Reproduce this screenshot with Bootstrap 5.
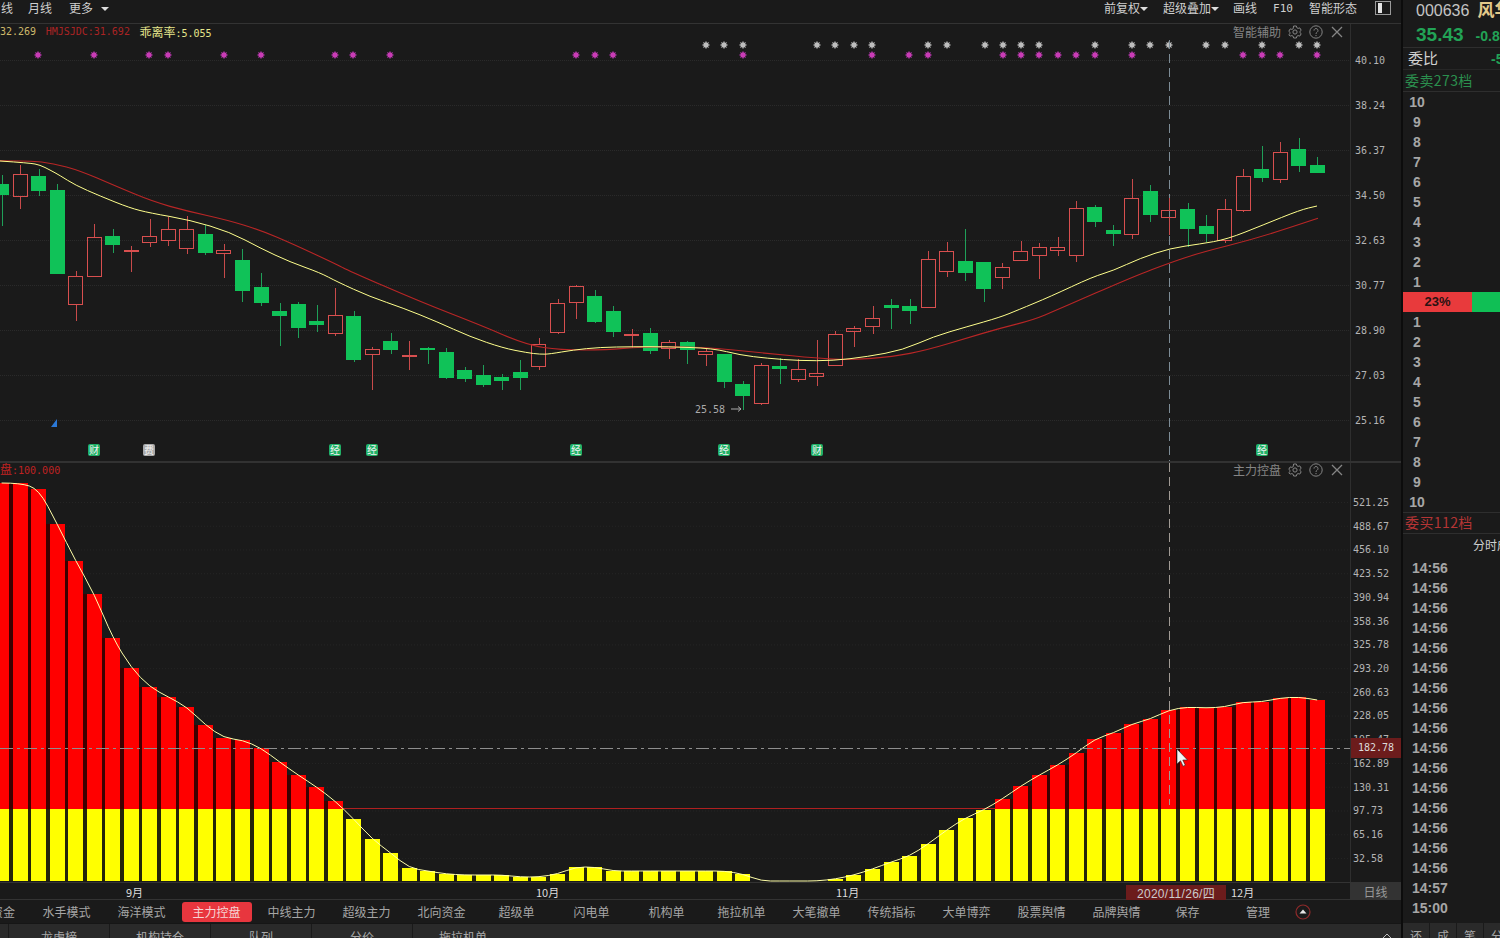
<!DOCTYPE html>
<html lang="zh-CN">
<head>
  <meta charset="UTF-8" />
  <meta name="viewport" content="width=device-width, initial-scale=1" />
  <title>000636 K线</title>
  <link href="https://cdn.jsdelivr.net/npm/bootstrap@5.3.0/dist/css/bootstrap.min.css" rel="stylesheet" />
  <style>
    html, body { height: 100%; overflow: hidden; }
    body { background: #1a1a1a; color: #bbb; font: 12px/1.2 "Liberation Sans", "Noto Sans CJK SC", sans-serif; }
    .cjk { font-family: "Noto Sans CJK SC", sans-serif; }
    .mono { font-family: "DejaVu Sans Mono", "Noto Sans CJK SC", monospace; font-size: 10px; }
    .mono .cjk { font-size: 12px; }
    .app { width: 1500px; height: 938px; overflow: hidden; }
    .main-col { width: 1401px; flex: none; }
    .side-col { width: 99px; flex: none; border-left: 2px solid #0c0c0c; white-space: nowrap; overflow: hidden; }

    .toolbar { height: 24px; flex: none; padding-bottom: 6px; border-bottom: 1px solid #333; color: #cfcfcf; font-family: "Noto Sans CJK SC", sans-serif; white-space: nowrap; }
    .toolbar .dropdown-toggle::after { margin-left: 0; vertical-align: 2px; border-top-width: 4px; border-left-width: 4px; border-right-width: 4px; color: #ddd; }
    .tool-left { margin-left: -11px; gap: 15px; }
    .tool-left .more-btn { margin-left: 2px; }
    .tool-left .more-btn::after { margin-left: 8px; }
    .tool-right { gap: 15px; padding-right: 10px; }
    .tool-right .f10-btn { font-size: 11px; margin-right: 1px; }
    .tool-right .super-btn { margin-right: -1px; }
    .tool-right .draw-btn { margin-right: 1px; }
    .layout-ico { width: 16px; height: 14px; margin-left: 3px; }

    .upper-panel { height: 439px; flex: none; border-bottom: 2px solid #323232; }
    .lower-panel { height: 419px; flex: none; }
    .chart-box { width: 1350px; flex: none; }
    .chart-box svg { display: block; width: 1350px; height: 100%; }
    .upper-panel .chart-box { height: 437px; }
    .axis-col { width: 51px; flex: none; border-left: 1px solid #2e2e2e; color: #b4b4b4; white-space: nowrap; overflow: hidden; }
    .upper-axis { padding-top: 14px; }
    .upper-axis div { height: 45px; line-height: 45px; padding-left: 4px; }
    .lower-axis { padding-top: 28px; }
    .lower-axis div { height: 23.73px; line-height: 23.73px; padding-left: 2px; }

    .info-line { left: 0; top: 1px; gap: 9.5px; line-height: 14px; white-space: nowrap; }
    .info-gold { color: #cdb96a; }
    .info-red { color: #aa2424; }
    .info-pale { color: #e6e68c; }
    .panel-tools { right: 6px; top: 0; width: 111px; height: 16px; color: #858585; }
    .lower-panel .panel-tools { top: -1px; }
    .panel-tools svg { width: 14px; height: 14px; flex: none; margin-left: 7px; }
    .lower-title { left: 0; top: -2px; color: #c02222; line-height: 14px; margin-top: 1px; white-space: nowrap; }
    .price-tag { left: 1351px; top: 275px; width: 50px; height: 20px; line-height: 20px; background: #6c1c1c; color: #ddd; text-align: center; }

    .date-row { height: 17px; flex: none; border-top: 1px solid #333; color: #ddd; }
    .month-label { top: 2px; line-height: 14px; font-size: 11px; }
    .date-tag { left: 1126px; top: 2px; width: 100px; height: 15px; line-height: 15px; background: #6c1c1c; color: #ccc; text-align: center; letter-spacing: .3px; }
    .period-box { left: 1350px; top: 0; width: 51px; height: 17px; line-height: 17px; background: #333; color: #999; text-align: center; }

    .tab-bar { height: 24px; flex: none; border-top: 1px solid #333; color: #a6a6a6; font-family: "Noto Sans CJK SC", sans-serif; white-space: nowrap; }
    .tab-item { width: 75px; flex: none; text-align: center; line-height: 20px; }
    .tab-cut { width: 38px; margin-left: -9px; text-align: left; }
    .tab-on { background: #e8363e; color: #f6d5d5; border-radius: 3px; margin: 0 2.5px; width: 70px; }
    .tab-save { width: 67px; }
    .tab-manage { width: 74px; }
    .up-ico { width: 16px; height: 16px; flex: none; }

    .foot-bar { height: 15px; flex: none; background: #2a2a2a; border-top: 1px solid #161616; color: #a8a8a8; font-family: "Noto Sans CJK SC", sans-serif; overflow: hidden; }
    .foot-cell { width: 101px; flex: none; text-align: center; border-left: 1px solid #1a1a1a; line-height: 14px; padding-top: 6px; height: 20px; }
    .foot-gap { width: 8px; flex: none; }
    .foot-chev { margin-left: auto; margin-right: 8px; width: 12px; height: 8px; margin-top: 8px; }

    .code-row { height: 19px; line-height: 19px; padding-left: 13px; color: #c4c4c4; font-size: 16px; overflow: hidden; }
    .stock-name { color: #e3c98a; font: bold 17px/1 "Noto Sans CJK SC", sans-serif; margin-left: 8px; }
    .price-row { height: 29px; line-height: 31px; padding-left: 13px; color: #22a356; font-weight: 700; border-bottom: 1px solid #2e2e2e; }
    .price-now { font-size: 19px; }
    .price-chg { font-size: 14px; margin-left: 12px; }
    .ratio-row { height: 21px; padding-left: 5px; font: 15px/20px "Noto Sans CJK SC", sans-serif; color: #d0d0d0; }
    .ratio-val { margin-left: 53px; color: #22a356; font-family: "Liberation Sans", sans-serif; font-weight: 700; font-size: 14px; }
    .book-head { height: 23px; line-height: 20px; font-size: 14px; font-family: "Noto Sans CJK SC", sans-serif; padding-left: 2px; letter-spacing: .4px; border-bottom: 1px solid #2e2e2e; }
    .book-sell { color: #2b8f4e; border-top: 1px solid #262626; }
    .book-buy { color: #b53535; border-top: 1px solid #2e2e2e; height: 22px; line-height: 19px; }
    .book-num { height: 20px; line-height: 20px; width: 28px; text-align: center; color: #a6a6a6; font-size: 14px; font-weight: 700; }
    .ratio-bar { height: 20px; }
    .ratio-red { width: 69px; background: #e83a3c; color: #2a1212; text-align: center; line-height: 20px; font-size: 13px; font-weight: 700; }
    .ratio-green { flex: 1; background: #10bf55; }
    .deal-head { height: 24px; line-height: 22px; padding-left: 70px; color: #cfcfcf; font-family: "Noto Sans CJK SC", sans-serif; }
    .deal-time { height: 20px; line-height: 20px; padding-left: 9px; color: #a6a6a6; font-size: 14px; font-weight: 700; }
    .side-foot { height: 15px; margin-top: 5px; background: #2a2a2a; color: #a8a8a8; font-family: "Noto Sans CJK SC", sans-serif; overflow: hidden; }
    .side-foot span { width: 27px; flex: none; text-align: center; padding-top: 6px; line-height: 14px; height: 20px; border-right: 1px solid #1a1a1a; }
  </style>
</head>
<body>

<svg width="0" height="0" class="position-absolute">
  <symbol id="gear" viewBox="0 0 14 14">
    <path d="M5.6 1h2.8l.4 1.7 1.3.7 1.7-.5 1.4 2.4-1.3 1.2v1l1.3 1.2-1.4 2.4-1.7-.5-1.3.7-.4 1.7H5.6l-.4-1.7-1.3-.7-1.7.5L.8 9.7 2.1 8.5v-1L.8 6.3l1.4-2.4 1.7.5 1.3-.7z" fill="none" stroke="currentColor" stroke-width="1"/>
    <circle cx="7" cy="7" r="2.1" fill="none" stroke="currentColor" stroke-width="1"/>
  </symbol>
  <symbol id="help" viewBox="0 0 14 14">
    <circle cx="7" cy="7" r="6.2" fill="none" stroke="currentColor" stroke-width="1"/>
    <path d="M5 5.6a2 2 0 1 1 3.1 1.6c-.7.5-1.1.9-1.1 1.7" fill="none" stroke="currentColor" stroke-width="1"/>
    <circle cx="7" cy="10.6" r=".7" fill="currentColor"/>
  </symbol>
  <symbol id="close" viewBox="0 0 14 14">
    <path d="M2 2l10 10M12 2L2 12" fill="none" stroke="currentColor" stroke-width="1.3"/>
  </symbol>
</svg>

<div class="app d-flex">
  <div class="main-col d-flex flex-column">

    <div class="toolbar d-flex align-items-center">
      <div class="tool-left d-flex">
        <span>周线</span><span>月线</span><span class="more-btn dropdown-toggle">更多</span>
      </div>
      <div class="tool-right d-flex align-items-center ms-auto">
        <span class="dropdown-toggle">前复权</span>
        <span class="dropdown-toggle super-btn">超级叠加</span>
        <span class="draw-btn">画线</span>
        <span class="mono f10-btn">F10</span>
        <span>智能形态</span>
        <svg class="layout-ico" viewBox="0 0 16 14">
          <rect x=".5" y=".5" width="15" height="13" fill="none" stroke="#9a9a9a"/>
          <rect x="3" y="2" width="4" height="10" fill="#e4e4e4"/>
        </svg>
      </div>
    </div>

    <div class="upper-panel d-flex">
      <div class="chart-box position-relative">
        <svg id="upperChart" viewBox="0 24 1350 437"></svg>
        <div class="info-line position-absolute d-flex mono">
          <span class="info-gold">32.269</span>
          <span class="info-red">HMJSJDC:31.692</span>
          <span class="info-pale"><span class="cjk">乖离率</span>:5.055</span>
        </div>
        <div class="panel-tools position-absolute d-flex align-items-center cjk">
          <span class="me-auto">智能辅助</span>
          <svg><use href="#gear"/></svg>
          <svg><use href="#help"/></svg>
          <svg><use href="#close"/></svg>
        </div>
      </div>
      <div id="upperAxis" class="axis-col upper-axis mono"></div>
    </div>

    <div class="lower-panel d-flex position-relative">
      <div class="chart-box position-relative">
        <svg id="lowerChart" viewBox="0 463 1350 419"></svg>
        <div class="lower-title position-absolute mono"><span class="cjk">盘</span>:100.000</div>
        <div class="panel-tools position-absolute d-flex align-items-center cjk">
          <span class="me-auto">主力控盘</span>
          <svg><use href="#gear"/></svg>
          <svg><use href="#help"/></svg>
          <svg><use href="#close"/></svg>
        </div>
      </div>
      <div id="lowerAxis" class="axis-col lower-axis mono"></div>
      <div class="price-tag position-absolute mono">182.78</div>
    </div>

    <div id="dateRow" class="date-row position-relative">
      <div class="date-tag position-absolute">2020/11/26/<span class="cjk">四</span></div>
      <div class="period-box position-absolute cjk">日线</div>
    </div>

    <div class="tab-bar d-flex align-items-center">
      <span class="tab-item tab-cut">资金</span>
      <span class="tab-item">水手模式</span>
      <span class="tab-item">海洋模式</span>
      <span class="tab-item tab-on">主力控盘</span>
      <span class="tab-item">中线主力</span>
      <span class="tab-item">超级主力</span>
      <span class="tab-item">北向资金</span>
      <span class="tab-item">超级单</span>
      <span class="tab-item">闪电单</span>
      <span class="tab-item">机构单</span>
      <span class="tab-item">拖拉机单</span>
      <span class="tab-item">大笔撤单</span>
      <span class="tab-item">传统指标</span>
      <span class="tab-item">大单博弈</span>
      <span class="tab-item">股票舆情</span>
      <span class="tab-item">品牌舆情</span>
      <span class="tab-item tab-save">保存</span>
      <span class="tab-item tab-manage">管理</span>
      <svg class="up-ico" viewBox="0 0 16 16">
        <circle cx="8" cy="8" r="7" fill="none" stroke="#8e2a2a" stroke-width="1.2"/>
        <path d="M4.5 9.5L8 5.5l3.500 4z" fill="#e8e8e8"/>
      </svg>
    </div>

    <div class="foot-bar d-flex">
      <div class="foot-gap"></div>
      <div class="foot-cell">龙虎榜</div>
      <div class="foot-cell">机构持仓</div>
      <div class="foot-cell">队列</div>
      <div class="foot-cell">分价</div>
      <div class="foot-cell">拖拉机单</div>
      <svg class="foot-chev" viewBox="0 0 12 8"><path d="M1 7l5-5 5 5" fill="none" stroke="#bbb"/></svg>
    </div>
  </div>

  <div class="side-col">
    <div class="code-row">000636<span class="stock-name">风华</span></div>
    <div class="price-row"><span class="price-now">35.43</span><span class="price-chg">-0.86</span></div>
    <div class="ratio-row">委比<span class="ratio-val">-5</span></div>
    <div class="book-head book-sell">委卖273档</div>
    <div id="sellList"></div>
    <div class="ratio-bar d-flex">
      <div class="ratio-red">23%</div>
      <div class="ratio-green"></div>
    </div>
    <div id="buyList"></div>
    <div class="book-head book-buy">委买112档</div>
    <div class="deal-head">分时成交</div>
    <div id="dealList"></div>
    <div class="side-foot d-flex">
      <span>还</span><span>成</span><span>笔</span><span>分</span>
    </div>
  </div>
</div>

<script src="https://cdn.jsdelivr.net/npm/bootstrap@5.3.0/dist/js/bootstrap.bundle.min.js"></script>
<script>
const PITCH = 18.53;
const barX = i => PITCH * i + 1.6;

// [up, wickTop, bodyTop, bodyBottom, wickBottom] read off the picture, in page pixels
const candles = [
  [0,175,184,195,226],[1,165,174,196,209],[0,169,176,191,196],[0,184,190,274,274],[1,271,276,304,321],
  [1,224,237,276,276],[0,229,236,245,253],[1,246,250,251,272],[1,219,236,242,247],[1,217,229,240,246],
  [1,216,229,248,254],[0,225,234,253,255],[1,244,250,253,278],[0,249,260,291,302],[0,273,287,303,306],
  [0,303,311,316,346],[0,302,304,328,338],[0,305,321,325,332],[1,288,315,333,336],[0,311,316,360,362],
  [1,347,349,354,390],[0,333,341,350,354],[1,341,355,356,370],[0,347,348,349,364],[0,348,352,378,379],
  [0,367,370,379,382],[0,365,375,385,387],[0,374,377,381,390],[0,360,372,378,390],[1,338,344,366,370],
  [1,299,303,332,334],[1,285,286,302,319],[0,290,296,322,323],[0,306,311,332,337],[1,329,334,335,348],
  [0,328,333,351,354],[1,340,342,348,359],[0,341,342,350,364],[1,348,351,354,366],[0,354,354,382,388],
  [0,381,384,396,410],[1,363,365,403,405],[0,358,366,369,384],[1,359,369,379,382],[1,340,373,376,386],
  [1,331,334,365,365],[1,326,328,331,347],[1,306,318,326,334],[0,299,305,308,329],[0,299,306,311,324],
  [1,251,259,307,307],[1,242,251,271,277],[0,229,261,273,281],[0,262,262,289,302],[1,263,267,277,289],
  [1,241,251,260,260],[1,243,247,255,279],[1,237,247,250,256],[1,201,208,255,262],[0,205,207,222,227],
  [0,225,230,234,246],[1,179,198,234,239],[0,185,191,215,222],[1,198,210,217,235],[0,203,209,229,247],
  [0,215,226,234,242],[1,199,209,240,243],[1,169,176,210,212],[0,146,169,178,182],[1,142,152,179,183],
  [0,138,149,166,172],[0,157,165,173,173]
];

const yellowMa = [[0,161],[30,163],[40,165],[50,170],[60,175.500],[75,185],[100,196],[130,208],[150,213],[190,220],[230,232],[260,248],[290,262],[320,272.700],[337,281.700],[370,296.700],[403,308],[437,321.700],[470,336.700],[503,348],[527,352.700],[540,354.300],[550,354],[573,350],[600,347.300],[633,346.700],[667,346.700],[713,348.300],[740,355],[767,358.300],[800,360.700],[833,360.700],[867,356.700],[903,350],[933,336.700],[967,326.700],[1000,317.300],[1018,310],[1050,296.700],[1093,276.700],[1113,270.700],[1140,258.300],[1170,248.300],[1200,244],[1227,239.300],[1263,225],[1300,210],[1317,206]];
const redMa = [[0,160.700],[30,160.700],[53,163.300],[80,170.700],[113,185],[153,201.700],[187,211],[227,220],[260,230],[293,244],[340,266],[347,270],[420,301.700],[480,325],[527,345],[560,350],[607,350],[640,346.700],[700,346.700],[767,353.300],[817,358.300],[850,360],[893,356.700],[927,350],[967,338],[1000,328.300],[1033,320],[1057,310],[1133,276.700],[1170,262.700],[1200,252.700],[1257,238.300],[1318,218.300]];

const whiteStars = [706,724,743,817,835,854,872,928,947,985,1003,1021,1039,1095,1132,1150,1169,1206,1225,1262,1299,1317];
const pinkStars = [38,94,149,168,224,261,335,353,390,576,595,613,743,872,909,928,1003,1021,1039,1058,1076,1095,1132,1243,1262,1280,1317];
const flags = [[94,'财',0],[149,'费',1],[335,'经',0],[372,'经',0],[576,'经',0],[724,'经',0],[817,'财',0],[1262,'经',0]];

// top edge of each bar on the control panel, 881 means no bar at all
const barTops = [483,483,489,524,561,594,638,668,687,697,707,725,738,740,748,762,775,787,801,819,839,853,868,871,874,875,875,875,877,877,874,867,867,871,871,871,871,871,871,871,874,881,881,881,881,879,875,869,862,856,844,830,818,810,799,786,775,765,753,739,733,724,719,710,707,708,707,702,702,698,697,700];

const upperLabels = ['40.10','38.24','36.37','34.50','32.63','30.77','28.90','27.03','25.16'];
const lowerLabels = ['521.25','488.67','456.10','423.52','390.94','358.36','325.78','293.20','260.63','228.05','195.47','162.89','130.31','97.73','65.16','32.58'];

function smoothPath(pts) {
  let d = `M${pts[0][0]} ${pts[0][1]}`;
  for (let i = 1; i < pts.length - 1; i++) {
    const mx = (pts[i][0] + pts[i + 1][0]) / 2;
    const my = (pts[i][1] + pts[i + 1][1]) / 2;
    d += `Q${pts[i][0]} ${pts[i][1]} ${mx} ${my}`;
  }
  const last = pts[pts.length - 1];
  return d + `L${last[0]} ${last[1]}`;
}

function star(x, y, fill, core) {
  let s = '';
  for (let a = 0; a < 4; a++) {
    const r = a * Math.PI / 4;
    const dx = 4 * Math.cos(r), dy = 4 * Math.sin(r);
    s += `<line x1="${x - dx}" y1="${y - dy}" x2="${x + dx}" y2="${y + dy}" stroke="${fill}" stroke-width=".9"/>`;
  }
  return s + `<circle cx="${x}" cy="${y}" r="2.700" fill="${core}"/>`;
}

function drawUpper() {
  let s = '';
  for (let i = 0; i < 9; i++) {
    const y = 60.5 + 45 * i;
    s += `<line x1="0" x2="1350" y1="${y}" y2="${y}" stroke="#2a2a2a" stroke-dasharray="1 1"/>`;
  }
  whiteStars.forEach(x => { s += star(x, 45, '#8f8f8f', '#bdbdbd'); });
  pinkStars.forEach(x => { s += star(x, 55, '#8c2c8c', '#c93cb6'); });

  s += `<line x1="1169.500" x2="1169.500" y1="40" y2="461" stroke="#7d8c96" stroke-dasharray="9 5"/>`;

  candles.forEach((c, i) => {
    const cx = Math.round(barX(i)) + 0.5;
    const [up, wt, bt, bb, wb] = c;
    const left = Math.round(barX(i) - 7.5);
    if (up) {
      s += `<line x1="${cx}" x2="${cx}" y1="${wt}" y2="${bt}" stroke="#c84a4a"/>`;
      s += `<line x1="${cx}" x2="${cx}" y1="${bb}" y2="${wb}" stroke="#c84a4a"/>`;
      s += `<rect x="${left + 0.5}" y="${bt + 0.5}" width="14" height="${Math.max(bb - bt, 1)}" fill="none" stroke="#d84f4f"/>`;
    } else {
      s += `<line x1="${cx}" x2="${cx}" y1="${wt}" y2="${wb}" stroke="#1f9f58"/>`;
      s += `<rect x="${left}" y="${bt}" width="15" height="${Math.max(bb - bt, 2)}" fill="#10c258"/>`;
    }
  });

  s += `<path d="${smoothPath(redMa)}" fill="none" stroke="#b92626" stroke-width="1.100"/>`;
  s += `<path d="${smoothPath(yellowMa)}" fill="none" stroke="#ffff8c"/>`;

  s += `<path d="M57 419v8h-6z" fill="#2b78d6"/>`;
  s += `<text x="695" y="413" class="mono" fill="#aaa" font-size="11.500">25.58</text>`;
  s += `<path d="M731 409h10M738 406.500l3 2.500-3 2.500" fill="none" stroke="#aaa"/>`;

  flags.forEach(([x, t, grey]) => {
    s += `<rect x="${x - 6}" y="444" width="12" height="12" rx="2" fill="${grey ? '#a9a9a9' : '#1fb066'}"/>`;
    s += `<text x="${x}" y="454" text-anchor="middle" class="cjk" font-size="10" fill="#f2f2f2">${t}</text>`;
  });
  document.getElementById('upperChart').innerHTML = s;
}

function drawLower() {
  const split = 809, floor = 881;
  let s = '';
  lowerLabels.forEach((_, i) => {
    const y = 502.500 + 23.73 * i;
    s += `<line x1="0" x2="1350" y1="${y}" y2="${y}" stroke="#252525" stroke-dasharray="1 2"/>`;
  });
  s += `<line x1="340" x2="1000" y1="808.500" y2="808.500" stroke="#b02020"/>`;

  barTops.forEach((top, i) => {
    if (top >= floor) return;
    const left = Math.round(barX(i) - 7.5);
    // dark bleed between neighbouring bars
    const next = barTops[i + 1];
    if (next !== undefined && next < floor) {
      const t = Math.max(top, next);
      if (t < split) s += `<rect x="${left + 15}" y="${t}" width="4" height="${split - t}" fill="#3e0000"/>`;
      s += `<rect x="${left + 15}" y="${Math.max(t, split)}" width="4" height="${floor - Math.max(t, split)}" fill="#24240a"/>`;
    }
    if (top < split) s += `<rect x="${left}" y="${top}" width="15" height="${split - top}" fill="#f00"/>`;
    const yt = Math.max(top, split);
    s += `<rect x="${left}" y="${yt}" width="15" height="${floor - yt}" fill="#ff0"/>`;
  });

  const line = barTops.map((top, i) => [+barX(i).toFixed(1), top]);
  s += `<path d="${smoothPath(line)}" fill="none" stroke="#ffffa8"/>`;

  s += `<line x1="0" x2="1350" y1="748.500" y2="748.500" stroke="#8e8e8e" stroke-dasharray="13 4 3 4"/>`;
  s += `<line x1="1169.500" x2="1169.500" y1="463" y2="805" stroke="#a09a94" stroke-dasharray="9 5"/>`;
  s += `<path d="M1177 749v15l3.500-3.200 2.600 5.400 2.200-1-2.500-5.200h4.700z" fill="#f4f4f4" stroke="#222" stroke-width=".6"/>`;
  document.getElementById('lowerChart').innerHTML = s;
}

function fillList(id, items, cls) {
  document.getElementById(id).innerHTML = items.map(t => `<div class="${cls}">${t}</div>`).join('');
}

const months = [['9月',126],['10月',536],['11月',836],['12月',1231]];
const dateRow = document.getElementById('dateRow');
months.forEach(([t, x]) => {
  const el = document.createElement('span');
  el.className = 'month-label position-absolute cjk';
  el.style.left = x + 'px';
  el.textContent = t;
  dateRow.appendChild(el);
});

fillList('upperAxis', upperLabels, '');
fillList('lowerAxis', lowerLabels, '');
fillList('sellList', [10,9,8,7,6,5,4,3,2,1], 'book-num');
fillList('buyList', [1,2,3,4,5,6,7,8,9,10], 'book-num');
fillList('dealList', Array(16).fill('14:56').concat(['14:57','15:00']), 'deal-time');
drawUpper();
drawLower();
</script>
</body>
</html>
